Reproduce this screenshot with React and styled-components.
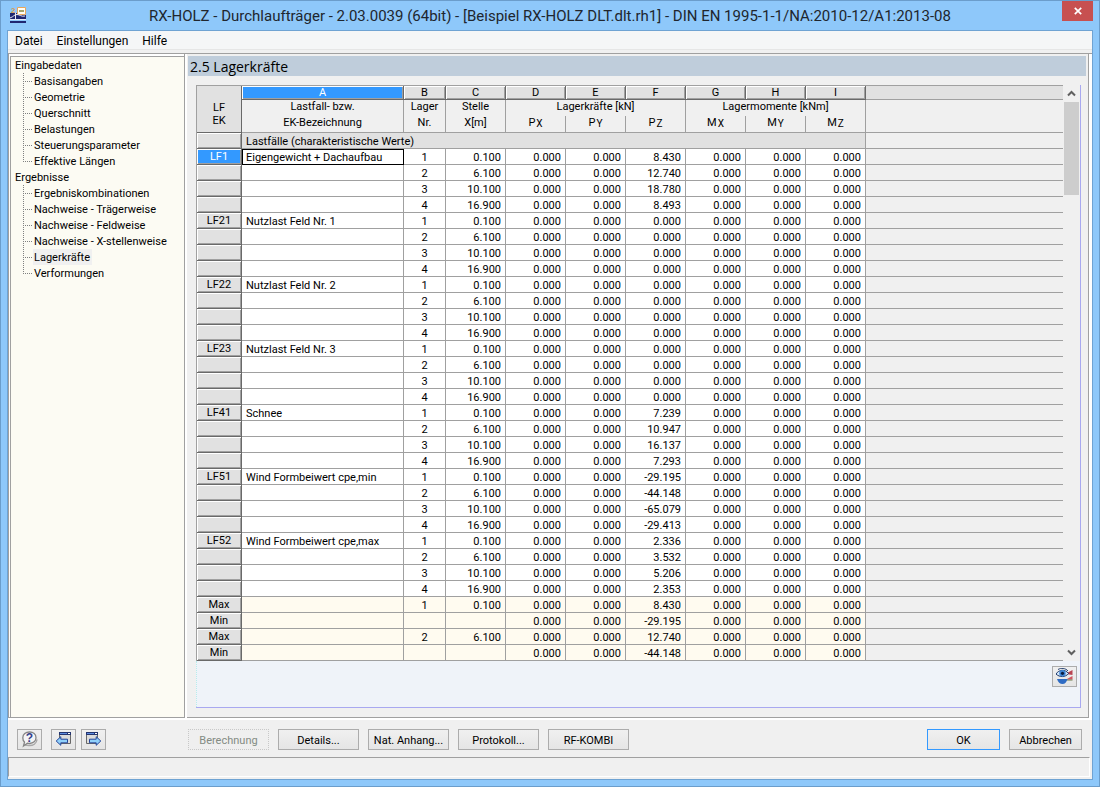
import React from "react";
import styled, { createGlobalStyle, css } from "styled-components";

const heading = `"Open Sans", "Noto Sans", sans-serif`;
const ui = `Roboto, "Liberation Sans", sans-serif`;

const GlobalStyle = createGlobalStyle`
  *, *::before, *::after { box-sizing: border-box; }
  body { margin: 0; background: #8ec8fa; color: #000; font: 11px/16px ${ui}; }
  button, a, th, td { font: inherit; color: inherit; }
  ul { list-style: none; margin: 0; padding: 0; }
`;

const Window = styled.div`
  display: flex;
  flex-direction: column;
  min-height: 100vh;
  padding: 0 6px 6px;
  border: 1px solid #6b9dcb;
  background: #8ec8fa;
`;

const TitleBar = styled.header`
  display: flex;
  align-items: flex-start;
  height: 29px;
  padding-left: 3px;
`;

const AppIcon = styled.svg`
  flex: none;
  width: 16px;
  height: 16px;
  margin-top: 6px;
`;

const Title = styled.h1`
  flex: 1;
  margin: 0;
  padding-left: 12px;
  text-align: center;
  font: 400 15px/30px ${ui};
  color: #20262e;
  white-space: nowrap;
`;

const CloseButton = styled.button`
  display: grid;
  place-items: center;
  width: 31px;
  height: 20px;
  padding: 0;
  border: 0;
  background: #c75050;
`;

const Client = styled.div`
  flex: 1;
  display: flex;
  flex-direction: column;
  border: 1px solid #6fa3d3;
  background: #f0f0f0;
`;

const MenuBar = styled.nav`
  display: flex;
  gap: 14px;
  height: 19px;
  padding-left: 7px;
  border-bottom: 1px solid #e6e6e6;
  background: #f5f6f7;
  font-size: 12px;
  line-height: 20px;
`;

const MenuItem = styled.button`
  padding: 0;
  border: 0;
  background: none;
  line-height: 20px;
`;

const Body = styled.div`
  flex: 1;
  display: flex;
  gap: 2px;
  margin-top: 3px;
  border-top: 1px solid #a0a0a0;
  border-bottom: 2px solid #fff;
  background: #fff;
`;

const TreePane = styled.nav`
  flex: none;
  width: 177px;
  padding: 2px 0 0 1px;
  border: 1px solid #a0a0a0;
  border-top: 0;
`;

const Tree = styled.div`
  height: 100%;
  border: solid #a0a0a0;
  border-width: 1px 0 0 1px;
  background: #fcfbf3;
`;

const Group = styled.div`
  padding-left: 3px;
`;

const Leaf = styled.li`
  display: flex;
  height: 16px;
  padding-left: 9px;
`;

const Branch = styled.span`
  width: 10px;
  background:
    repeating-linear-gradient(#808080 0 1px, transparent 1px 2px) 0 0 / 1px ${(p) => (p.$last ? "9px" : "100%")} no-repeat,
    repeating-linear-gradient(90deg, #808080 0 1px, transparent 1px 2px) 0 8px / 9px 1px no-repeat;
`;

const TreeLink = styled.a`
  display: block;
  padding: 2px 2px 0 1px;
  line-height: 14px;
  text-decoration: none;
  white-space: nowrap;
  background: ${(p) => (p.$active ? "#f0f0f0" : "none")};
`;

const MainPane = styled.main`
  flex: 1;
  min-width: 0;
  display: flex;
  flex-direction: column;
  margin-right: 3px;
  padding: 2px 2px 9px 1px;
  border: solid #a0a0a0;
  border-width: 0 1px 1px 0;
  background: #f0f0f0;
`;

const PaneTitle = styled.h2`
  margin: 0 0 9px;
  padding: 2px 0 0 2px;
  background: #bfcddb;
  font: 400 14px/18px ${heading};
`;

const Results = styled.section`
  flex: 1;
  display: flex;
  flex-direction: column;
  margin: 0 5px 0 8px;
  border: solid #a8a8f0;
  border-width: 0 1px 1px 0;
  background: #eff3f9;
`;

const GridArea = styled.div`
  display: flex;
  background: #f0f0f0;
`;

const Sheet = styled.table`
  flex: 1;
  min-width: 0;
  width: 100%;
  table-layout: fixed;
  border-collapse: separate;
  border-spacing: 0;
  border: solid #a0a0a0;
  border-width: 1px 0 0 1px;
  font: 11px/13px ${ui};

  th { font-weight: 400; }
`;

const Col = styled.col`
  width: ${(p) => p.$w}px;
`;

const Letter = styled.th`
  height: 14px;
  padding: 0;
  border: solid #696969;
  border-width: 0 1px 1px 0;
  background: ${(p) => (p.$active ? "#3399ff" : "#e1e1e1")};
  color: ${(p) => (p.$active ? "#fff" : "#000")};
  box-shadow: inset 1px 1px #fff, inset -1px -1px #a0a0a0;
`;

const Corner = styled.th`
  padding: 10px 0 0;
  border: solid #696969;
  border-width: 0 1px 1px 0;
  background: #e1e1e1;
`;

const Caption = styled.th`
  height: ${(p) => (p.$lower ? 17 : 16)}px;
  padding: 0;
  border: solid #a0a0a0;
  border-width: 0 1px ${(p) => (p.$lower ? 1 : 0)}px 0;
  background: #f0f0f0;
  vertical-align: top;
`;

const Axis = styled.sub`
  margin-left: 1px;
  font-size: 10px;
  line-height: 1;
  vertical-align: -1px;
`;

const RowHead = styled.th`
  height: 16px;
  padding: 0;
  border: solid #696969;
  border-width: 0 1px 1px 0;
  background: ${(p) => (p.$active ? "#3399ff" : "#e1e1e1")};
  color: ${(p) => (p.$active ? "#fff" : "#000")};
  box-shadow: inset 1px 1px #fff, inset -1px -1px #a0a0a0;
`;

const Cell = styled.td`
  height: 16px;
  padding: 2px 4px 0;
  border: solid #a0a0a0;
  border-width: 0 1px 1px 0;
  background: ${(p) => (p.$tone === "sum" ? "#fffbf0" : p.$tone === "group" ? "#e1e1e1" : "#fff")};
  text-align: ${(p) => p.$align || "right"};
  white-space: nowrap;
  ${(p) =>
    p.$focus &&
    css`
      border-color: #000;
      box-shadow: inset 1px 1px #000;
    `}
`;

const Filler = styled.td`
  padding: 0;
  border-bottom: ${(p) => (p.$open ? 0 : 1)}px solid #a0a0a0;
  background: ${(p) => (p.$shade ? "#e1e1e1" : "#f0f0f0")};
`;

const ScrollTrack = styled.div`
  flex: none;
  display: flex;
  flex-direction: column;
  width: 16px;
  margin-left: 1px;
`;

const ScrollButton = styled.button`
  display: grid;
  place-items: center;
  width: 15px;
  height: 17px;
  padding: 0;
  border: 0;
  background: none;
`;

const ScrollThumb = styled.div`
  width: 15px;
  height: 93px;
  margin-bottom: auto;
  background: #cdcdcd;
`;

const ResultTools = styled.div`
  flex: 1;
  display: flex;
  align-items: flex-start;
  justify-content: flex-end;
  padding: 5px 3px 0 0;
  border-left: 1px dotted #b8ecec;
`;

const IconButton = styled.button`
  display: grid;
  place-items: center;
  width: 25px;
  height: 21px;
  padding: 0;
  border: 1px solid #acacac;
  background: linear-gradient(#f0f0f0, #e5e5e5);
`;

const Footer = styled.footer`
  display: flex;
  align-items: flex-start;
  height: 37px;
  padding: 9px 10px 0 9px;
`;

const NavButtons = styled.div`
  display: flex;
  gap: 5px;
  width: 137px;
  margin-left: 9px;
`;

const Actions = styled.div`
  display: flex;
  gap: 9px;
  margin-left: ${(p) => (p.$end ? "auto" : 0)};
`;

const PushButton = styled.button`
  width: ${(p) => (p.$narrow ? 73 : 81)}px;
  height: 21px;
  padding: 2px 0 0;
  border: 1px solid ${(p) => (p.$default ? "#3399ff" : "#acacac")};
  background: linear-gradient(#f0f0f0, #e5e5e5);
  white-space: nowrap;

  &:disabled {
    border: 1px dotted #c8c8c8;
    background: #efefef;
    color: #838b83;
  }
`;

const StatusBar = styled.div`
  height: 20px;
  margin: 0 2px 2px 0;
  border: 1px solid #a0a0a0;
  border-right-color: #fff;
  border-bottom-color: #fff;
`;

const inputPages = ["Basisangaben", "Geometrie", "Querschnitt", "Belastungen", "Steuerungsparameter", "Effektive Längen"];
const resultPages = [
  "Ergebniskombinationen",
  "Nachweise - Trägerweise",
  "Nachweise - Feldweise",
  "Nachweise - X-stellenweise",
  "Lagerkräfte",
  "Verformungen",
];

const positions = ["0.100", "6.100", "10.100", "16.900"];
const zero = ["0.000", "0.000", "0.000", "0.000"];
const loadCases = [
  { id: "LF1", name: "Eigengewicht + Dachaufbau", pz: ["8.430", "12.740", "18.780", "8.493"] },
  { id: "LF21", name: "Nutzlast Feld Nr. 1", pz: zero },
  { id: "LF22", name: "Nutzlast Feld Nr. 2", pz: zero },
  { id: "LF23", name: "Nutzlast Feld Nr. 3", pz: zero },
  { id: "LF41", name: "Schnee", pz: ["7.239", "10.947", "16.137", "7.293"] },
  { id: "LF51", name: "Wind Formbeiwert cpe,min", pz: ["-29.195", "-44.148", "-65.079", "-29.413"] },
  { id: "LF52", name: "Wind Formbeiwert cpe,max", pz: ["2.336", "3.532", "5.206", "2.353"] },
];
const extremes = [
  { id: "Max", nr: "1", x: "0.100", pz: "8.430" },
  { id: "Min", nr: "", x: "", pz: "-29.195" },
  { id: "Max", nr: "2", x: "6.100", pz: "12.740" },
  { id: "Min", nr: "", x: "", pz: "-44.148" },
];

const rows = [
  ...loadCases.flatMap((lf) =>
    lf.pz.map((pz, i) => ({
      id: i ? "" : lf.id,
      name: i ? "" : lf.name,
      nr: String(i + 1),
      x: positions[i],
      pz,
    }))
  ),
  ...extremes.map((e) => ({ ...e, name: "", sum: true })),
];

function TreeGroup({ title, pages, active }) {
  return (
    <Group>
      <TreeLink href="#">{title}</TreeLink>
      <ul>
        {pages.map((page, i) => (
          <Leaf key={page}>
            <Branch $last={i === pages.length - 1} />
            <TreeLink href="#" $active={page === active}>{page}</TreeLink>
          </Leaf>
        ))}
      </ul>
    </Group>
  );
}

function ResultRow({ row, active }) {
  const tone = row.sum ? "sum" : "plain";
  return (
    <tr>
      <RowHead scope="row" $active={active}>{row.id}</RowHead>
      <Cell $tone={tone} $align="left" $focus={active}>{row.name}</Cell>
      <Cell $tone={tone} $align="center">{row.nr}</Cell>
      <Cell $tone={tone}>{row.x}</Cell>
      <Cell $tone={tone}>0.000</Cell>
      <Cell $tone={tone}>0.000</Cell>
      <Cell $tone={tone}>{row.pz}</Cell>
      <Cell $tone={tone}>0.000</Cell>
      <Cell $tone={tone}>0.000</Cell>
      <Cell $tone={tone}>0.000</Cell>
      <Filler />
    </tr>
  );
}

function SupportForces() {
  return (
    <Sheet>
      <colgroup>
        {[45, 162, 42, 60, 60, 60, 60, 60, 60, 60].map((w, i) => (
          <Col key={i} $w={w} />
        ))}
        <col />
      </colgroup>
      <thead>
        <tr>
          <Corner rowSpan={3}>LF<br />EK</Corner>
          {"ABCDEFGHI".split("").map((l) => (
            <Letter key={l} $active={l === "A"}>{l}</Letter>
          ))}
          <Filler $shade />
        </tr>
        <tr>
          <Caption>Lastfall- bzw.</Caption>
          <Caption>Lager</Caption>
          <Caption>Stelle</Caption>
          <Caption colSpan={3}>Lagerkräfte [kN]</Caption>
          <Caption colSpan={3}>Lagermomente [kNm]</Caption>
          <Filler $open />
        </tr>
        <tr>
          <Caption $lower>EK-Bezeichnung</Caption>
          <Caption $lower>Nr.</Caption>
          <Caption $lower>X[m]</Caption>
          {["PX", "PY", "PZ", "MX", "MY", "MZ"].map((q) => (
            <Caption $lower key={q}>{q[0]}<Axis>{q[1]}</Axis></Caption>
          ))}
          <Filler />
        </tr>
      </thead>
      <tbody>
        <tr>
          <RowHead />
          <Cell $tone="group" $align="left" colSpan={9}>Lastfälle (charakteristische Werte)</Cell>
          <Filler />
        </tr>
        {rows.map((row, i) => (
          <ResultRow key={i} row={row} active={i === 0} />
        ))}
      </tbody>
    </Sheet>
  );
}

const Chevron = ({ down }) => (
  <svg width="9" height="7" viewBox="0 0 9 7" aria-hidden="true">
    <path d={down ? "M1 1.5 4.5 5 8 1.5" : "M1 5.5 4.5 2 8 5.5"} fill="none" stroke="#606060" strokeWidth="2" />
  </svg>
);

const HelpIcon = () => (
  <svg width="17" height="17" viewBox="0 0 17 17" aria-hidden="true">
    <path d="M4 14 8 14.500c4 .2 7.500-2 8-6" fill="none" stroke="#a8a8a8" strokeWidth="1.5" />
    <path d="M8.500 1C12.300 1 15 3.400 15 6.700S12.300 12.500 8.500 12.500c-.8 0-1.500-.1-2.100-.3L2.500 15l1-3.900C2.400 10.100 1.800 8.500 1.800 6.700 1.800 3.400 4.700 1 8.500 1z" fill="#f4f4f6" stroke="#858585" strokeWidth="1.3" />
    <text x="8.500" y="11" textAnchor="middle" fontFamily="Liberation Sans, sans-serif" fontWeight="700" fontSize="12" fill="#34418c">?</text>
  </svg>
);

const PageIcon = ({ next }) => (
  <svg width="17" height="17" viewBox="0 0 17 17" aria-hidden="true">
    <g transform={next ? "translate(-3 0)" : undefined}>
      <path d="M4.500 2.500h11v10h-11z" fill="#dcdcdc" stroke="#686868" />
      <path d="M4 1h12v3H4z" fill="#25356f" />
      <path d="M5 2h7v1H5z" fill="#5c8be0" />
      <path d="M13 2h2v1h-2z" fill="#fff" />
    </g>
    <path
      d={next ? "M15.800 10 11.200 5.700v2.500H4.500v3.600h6.700v2.500z" : "M1.200 10 5.800 5.700v2.500h6.700v3.600H5.800v2.500z"}
      fill="#8fd0fa"
      stroke="#24459b"
    />
  </svg>
);

const ViewIcon = () => (
  <svg width="17" height="17" viewBox="0 0 17 17" aria-hidden="true">
    <path d="M10 5.500 16.500 2v5l-6.500-1z" fill="#b84452" />
    <path d="M10 11.500 16.500 8v3.500z" fill="#d05560" />
    <path d="M8 11.500h8.500v1H8z" fill="#6c7a4a" />
    <path d="M1 11h10.500c-.8 3-2.600 5-5 5S1.800 14 1 11z" fill="#2f6cc4" />
    <path d="M0 6C3 1.500 9 .8 12.500 5.500 9.500 9.500 3.500 9.500 0 6z" fill="#d3e7fa" stroke="#1c3768" />
    <circle cx="6.500" cy="5.300" r="3.200" fill="#3f86d6" />
    <circle cx="6.500" cy="5.300" r="1.600" fill="#0b1c3d" />
    <path d="M2 1.500C5-.3 9.500 0 12 3" fill="none" stroke="#27406e" />
  </svg>
);

export default function App() {
  return (
    <>
      <GlobalStyle />
      <Window>
        <TitleBar>
          <AppIcon viewBox="0 0 16 16" aria-hidden="true">
            <text x="1" y="6" fontFamily="Liberation Sans, sans-serif" fontWeight="700" fontSize="8" fill="#d99a4e">2</text>
            <path d="M7.500.5h8v7h-8z" fill="#fffdf4" stroke="#e8a75c" />
            <path d="M9 3h5v2H9z" fill="#a7a46b" />
            <path d="M0 6h7v2h9v5H0z" fill="#1f2671" />
            <path d="M0 11c4-1.500 4-3.500 7-3.500S11 10 15 9M5.500 6v7M0 12.500h16" fill="none" stroke="#e7eaf6" />
            <path d="M0 14h16v2H0z" fill="#1f2671" />
          </AppIcon>
          <Title>RX-HOLZ - Durchlaufträger - 2.03.0039 (64bit) - [Beispiel RX-HOLZ DLT.dlt.rh1] - DIN EN 1995-1-1/NA:2010-12/A1:2013-08</Title>
          <CloseButton aria-label="Schließen">
            <svg width="8" height="8" viewBox="0 0 8 8" aria-hidden="true">
              <path d="M.8.8 7.200 7.200M7.200.8.8 7.200" stroke="#fff" strokeWidth="1.7" />
            </svg>
          </CloseButton>
        </TitleBar>
        <Client>
          <MenuBar>
            <MenuItem>Datei</MenuItem>
            <MenuItem>Einstellungen</MenuItem>
            <MenuItem>Hilfe</MenuItem>
          </MenuBar>
          <Body>
            <TreePane>
              <Tree>
                <TreeGroup title="Eingabedaten" pages={inputPages} />
                <TreeGroup title="Ergebnisse" pages={resultPages} active="Lagerkräfte" />
              </Tree>
            </TreePane>
            <MainPane>
              <PaneTitle>2.5 Lagerkräfte</PaneTitle>
              <Results>
                <GridArea>
                  <SupportForces />
                  <ScrollTrack>
                    <ScrollButton aria-label="Nach oben"><Chevron /></ScrollButton>
                    <ScrollThumb />
                    <ScrollButton aria-label="Nach unten"><Chevron down /></ScrollButton>
                  </ScrollTrack>
                </GridArea>
                <ResultTools>
                  <IconButton aria-label="Ansicht"><ViewIcon /></IconButton>
                </ResultTools>
              </Results>
            </MainPane>
          </Body>
          <Footer>
            <IconButton aria-label="Hilfe"><HelpIcon /></IconButton>
            <NavButtons>
              <IconButton aria-label="Vorherige Maske"><PageIcon /></IconButton>
              <IconButton aria-label="Nächste Maske"><PageIcon next /></IconButton>
            </NavButtons>
            <Actions>
              <PushButton disabled>Berechnung</PushButton>
              <PushButton>Details...</PushButton>
              <PushButton>Nat. Anhang...</PushButton>
              <PushButton>Protokoll...</PushButton>
              <PushButton>RF-KOMBI</PushButton>
            </Actions>
            <Actions $end>
              <PushButton $narrow $default>OK</PushButton>
              <PushButton $narrow>Abbrechen</PushButton>
            </Actions>
          </Footer>
          <StatusBar role="status" />
        </Client>
      </Window>
    </>
  );
}
